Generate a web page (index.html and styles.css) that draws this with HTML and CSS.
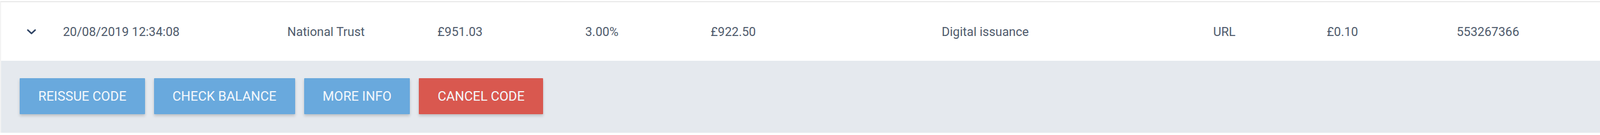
FILE: index.html
```html
<!DOCTYPE html>
<html>
<head>
<meta charset="utf-8">
<link rel="stylesheet" href="styles.css">
</head>
<body>
<div class="card">
  <div class="row">
    <div class="cell toggle">
      <svg class="chev" width="16" height="10" viewBox="0 0 16 10"><path d="M1.5 1.5 L8 7.5 L14.5 1.5" fill="none" stroke="#2d4263" stroke-width="2.6" stroke-linecap="round" stroke-linejoin="round"/></svg>
    </div>
    <div class="cell c-date">20/08/2019 12:34:08</div>
    <div class="cell c-name">National Trust</div>
    <div class="cell c-amount">£951.03</div>
    <div class="cell c-pct">3.00%</div>
    <div class="cell c-value">£922.50</div>
    <div class="cell c-type">Digital issuance</div>
    <div class="cell c-url">URL</div>
    <div class="cell c-fee">£0.10</div>
    <div class="cell c-id">553267366</div>
  </div>
  <div class="actions">
    <button class="btn btn-blue">REISSUE CODE</button>
    <button class="btn btn-blue">CHECK BALANCE</button>
    <button class="btn btn-blue">MORE INFO</button>
    <button class="btn btn-red">CANCEL CODE</button>
  </div>
</div>
</body>
</html>
```

FILE: styles.css
```css
html, body {
  margin: 0;
  padding: 0;
  background: #ffffff;
}
body {
  padding-top: 2px;
  font-family: Roboto, "Liberation Sans", sans-serif;
}
.card {
  border-top: 2px solid #e9e9e9;
  border-left: 2px solid #f3f3f3;
}
.row {
  display: flex;
  align-items: center;
  height: 104px;
  background: #ffffff;
  color: #4f5b6c;
  font-size: 22px;
}
.cell {
  flex: none;
  white-space: nowrap;
}
.toggle {
  width: 110px;
  padding-left: 46px;
  box-sizing: border-box;
  display: flex;
  align-items: center;
  margin-top: 2px;
}
.chev { display: block; }
.c-date { width: 399px; }
.c-name { width: 267px; }
.c-amount { width: 263px; }
.c-pct { width: 223px; }
.c-value { width: 411px; }
.c-type { width: 483px; }
.c-url { width: 202px; }
.c-fee { width: 231px; }
.c-id { flex: 1; }
.actions {
  display: flex;
  gap: 16px;
  background: #e5e9ee;
  height: 128px;
  padding: 31px 0 0 33px;
  box-sizing: border-box;
}
.btn {
  height: 64px;
  padding: 0 33px;
  border: none;
  border-radius: 1px;
  font-family: Roboto, "Liberation Sans", sans-serif;
  font-size: 23.5px;
  font-weight: 400;
  color: #f4f8fc;
  box-shadow: 0 3px 5px rgba(0, 0, 0, 0.18);
}
.btn-blue { background: #69a9dd; }
.btn-red { background: #d9584f; }
```
